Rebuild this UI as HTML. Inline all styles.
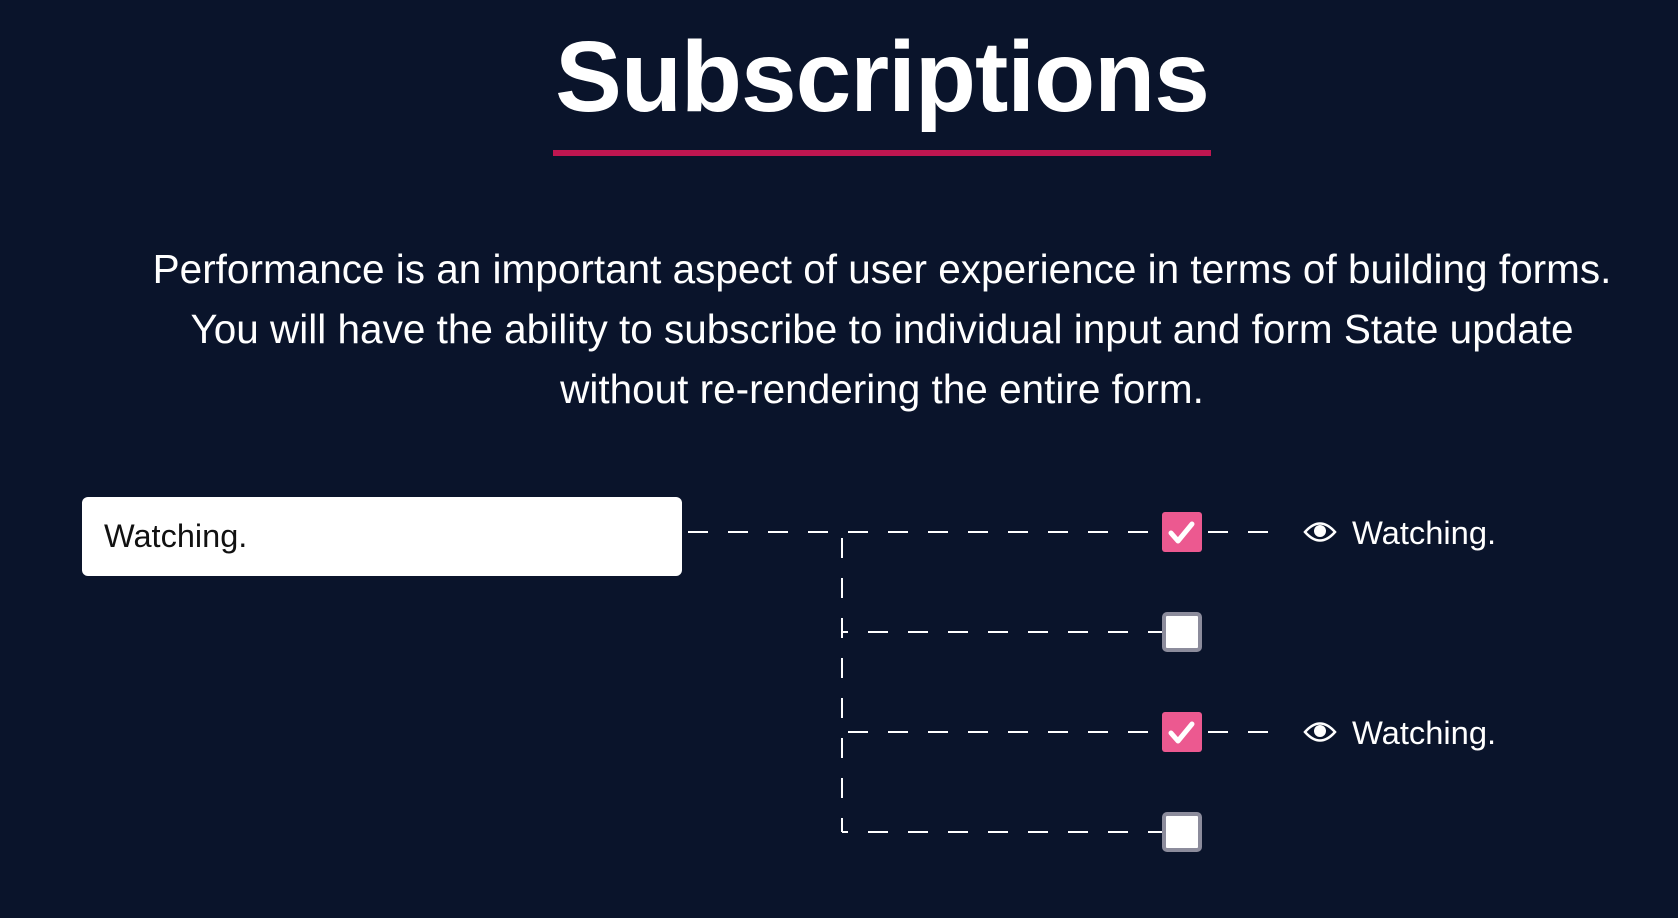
<!DOCTYPE html>
<html><head><meta charset="utf-8"><style>
html,body{margin:0;padding:0;background:#0a142b;width:1678px;height:918px;overflow:hidden;font-family:"Liberation Sans",Helvetica,Arial,sans-serif;color:#fff}
h1{position:absolute;left:0;width:1764px;top:17px;margin:0;text-align:center;font-size:100px;font-weight:bold;letter-spacing:-1px;line-height:120px}
.ul{position:absolute;left:553px;top:150px;width:658px;height:6px;background:#bf1650}
p{position:absolute;left:0;width:1764px;top:239px;margin:0;text-align:center;font-size:40.5px;line-height:60px}
.inp{position:absolute;left:82px;top:497px;width:600px;height:79px;background:#fff;border-radius:6px;color:#111;font-size:32.5px;line-height:79px;box-sizing:border-box;padding-left:22px}
.w{position:absolute;left:1352px;font-size:32.7px;line-height:40px}
</style></head><body>
<h1>Subscriptions</h1>
<div class="ul"></div>
<p>Performance is an important aspect of user experience in terms of building forms.<br>You will have the ability to subscribe to individual input and form State update<br>without re-rendering the entire form.</p>
<div class="inp">Watching.</div>
<svg width="1678" height="918" style="position:absolute;left:0;top:0" xmlns="http://www.w3.org/2000/svg">
<g stroke="#fff" stroke-width="2" fill="none" stroke-dasharray="20 20">
<line x1="688" y1="532" x2="1162" y2="532"/>
<line x1="842" y1="538" x2="842" y2="832"/>
<line x1="868" y1="632" x2="1162" y2="632"/>
<line x1="848" y1="732" x2="1162" y2="732"/>
<line x1="868" y1="832" x2="1162" y2="832"/>
<line x1="1208" y1="532" x2="1268" y2="532"/>
<line x1="1208" y1="732" x2="1268" y2="732"/>
</g>
<g stroke="#fff" stroke-width="2">
<line x1="842" y1="618" x2="842" y2="638"/><line x1="842" y1="632" x2="848" y2="632"/>
<line x1="842" y1="818" x2="842" y2="832"/><line x1="842" y1="832" x2="848" y2="832"/>
<line x1="1148" y1="632" x2="1162" y2="632"/><line x1="1148" y1="832" x2="1162" y2="832"/>
</g>
<rect x="1162" y="512" width="40" height="40" rx="3" fill="#ec5990"/>
<path d="M1171 533 l7 8 l14 -17" stroke="#fff" stroke-width="5" fill="none" stroke-linecap="round" stroke-linejoin="round"/>
<rect x="1162" y="712" width="40" height="40" rx="3" fill="#ec5990"/>
<path d="M1171 733 l7 8 l14 -17" stroke="#fff" stroke-width="5" fill="none" stroke-linecap="round" stroke-linejoin="round"/>
<rect x="1164" y="614" width="36" height="36" rx="3" fill="#fff" stroke="#8c8c9c" stroke-width="4"/>
<rect x="1164" y="814" width="36" height="36" rx="3" fill="#fff" stroke="#8c8c9c" stroke-width="4"/>
<g fill="none" stroke="#fff" stroke-width="2.5">
<path d="M1305 532 Q1320 515 1335 532 Q1320 549 1305 532 Z"/>
<path d="M1305 732 Q1320 715 1335 732 Q1320 749 1305 732 Z"/>
</g>
<circle cx="1320" cy="531" r="6" fill="#fff"/>
<circle cx="1320" cy="731" r="6" fill="#fff"/>
</svg>
<div class="w" style="top:513px">Watching.</div>
<div class="w" style="top:713px">Watching.</div>
</body></html>
